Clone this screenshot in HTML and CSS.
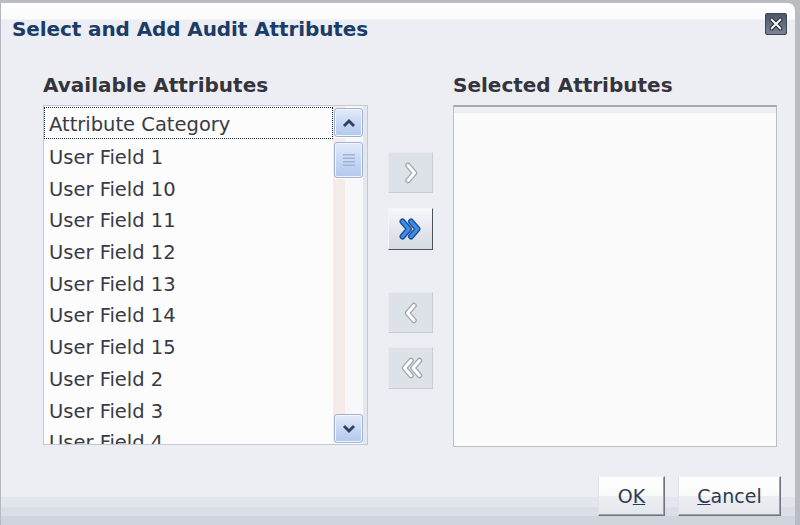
FILE: index.html
```html
<!DOCTYPE html>
<html>
<head>
<meta charset="utf-8">
<link rel="stylesheet" href="styles.css">
</head>
<body>
<div class="dialog">
  <div class="titlebar">
    <div class="title">Select and Add Audit Attributes</div>
    <div class="close">
      <svg width="22" height="22" viewBox="0 0 22 22">
        <path d="M6.5 6.5 L15.5 15.5 M15.5 6.5 L6.5 15.5" stroke="#262d3b" stroke-width="4" stroke-linecap="round"/>
        <path d="M6.5 6.5 L15.5 15.5 M15.5 6.5 L6.5 15.5" stroke="#ffffff" stroke-width="1.8" stroke-linecap="round"/>
      </svg>
    </div>
  </div>
  <div class="main">
    <div class="col col-left">
      <div class="heading">Available Attributes</div>
      <div class="listbox">
        <div class="items">
          <div class="item focused">Attribute Category</div>
          <div class="item">User Field 1</div>
          <div class="item">User Field 10</div>
          <div class="item">User Field 11</div>
          <div class="item">User Field 12</div>
          <div class="item">User Field 13</div>
          <div class="item">User Field 14</div>
          <div class="item">User Field 15</div>
          <div class="item">User Field 2</div>
          <div class="item">User Field 3</div>
          <div class="item">User Field 4</div>
        </div>
        <div class="scrollbar">
          <div class="sb-btn sb-up">
            <svg width="14" height="10" viewBox="0 0 14 10"><path d="M2 8 L7 3 L12 8" fill="none" stroke="#2f4461" stroke-width="3"/></svg>
          </div>
          <div class="sb-thumb">
            <svg width="12" height="14" viewBox="0 0 12 14">
              <rect x="0" y="1" width="12" height="1.5" fill="#9db3da"/>
              <rect x="0" y="4.5" width="12" height="1.5" fill="#9db3da"/>
              <rect x="0" y="8" width="12" height="1.5" fill="#9db3da"/>
              <rect x="0" y="11.5" width="12" height="1.5" fill="#9db3da"/>
            </svg>
          </div>
          <div class="sb-track"></div>
          <div class="sb-btn sb-down">
            <svg width="14" height="10" viewBox="0 0 14 10"><path d="M2 2 L7 7 L12 2" fill="none" stroke="#2f4461" stroke-width="3"/></svg>
          </div>
        </div>
      </div>
    </div>
    <div class="shuttle">
      <div class="sbtn sbtn-1">
        <svg width="18" height="22" viewBox="0 0 18 22"><path d="M6 3.5 L12.5 11 L6 18.5" fill="none" stroke="#9ea4ad" stroke-width="5.5" stroke-linejoin="round" stroke-linecap="round"/><path d="M6 3.5 L12.5 11 L6 18.5" fill="none" stroke="#ffffff" stroke-width="3" stroke-linejoin="round" stroke-linecap="round"/></svg>
      </div>
      <div class="sbtn sbtn-2 enabled">
        <svg width="28" height="22" viewBox="0 0 28 22"><path d="M5.5 3.5 L12 11 L5.5 18.5 M14 3.5 L20.5 11 L14 18.5" fill="none" stroke="#1e4f9f" stroke-width="6" stroke-linejoin="round" stroke-linecap="round"/><path d="M5.5 3.5 L12 11 L5.5 18.5 M14 3.5 L20.5 11 L14 18.5" fill="none" stroke="#3f8ee3" stroke-width="3.2" stroke-linejoin="round" stroke-linecap="round"/></svg>
      </div>
      <div class="sbtn sbtn-3">
        <svg width="18" height="22" viewBox="0 0 18 22"><path d="M12 3.5 L5.5 11 L12 18.5" fill="none" stroke="#9ea4ad" stroke-width="5.5" stroke-linejoin="round" stroke-linecap="round"/><path d="M12 3.5 L5.5 11 L12 18.5" fill="none" stroke="#ffffff" stroke-width="3" stroke-linejoin="round" stroke-linecap="round"/></svg>
      </div>
      <div class="sbtn sbtn-4">
        <svg width="28" height="22" viewBox="0 0 28 22"><path d="M14 3.5 L7.5 11 L14 18.5 M22.5 3.5 L16 11 L22.5 18.5" fill="none" stroke="#9ea4ad" stroke-width="5.5" stroke-linejoin="round" stroke-linecap="round"/><path d="M14 3.5 L7.5 11 L14 18.5 M22.5 3.5 L16 11 L22.5 18.5" fill="none" stroke="#ffffff" stroke-width="3" stroke-linejoin="round" stroke-linecap="round"/></svg>
      </div>
    </div>
    <div class="col col-right">
      <div class="heading">Selected Attributes</div>
      <div class="listbox listbox-right"></div>
    </div>
  </div>
  <div class="footer">
    <button class="btn btn-ok">O<u>K</u></button>
    <button class="btn btn-cancel"><u>C</u>ancel</button>
  </div>
</div>
</body>
</html>
```
FILE: styles.css
```css
html, body {
  margin: 0;
  padding: 0;
  width: 800px;
  height: 525px;
  overflow: hidden;
  background: #b9bcc3;
}
body {
  font-family: "DejaVu Sans", "Liberation Sans", sans-serif;
  color: #3a3a44;
}
.dialog {
  box-sizing: border-box;
  width: 795px;
  height: 522px;
  margin-top: 3px;
  border-left: 1px solid #b4b8c0;
  border-radius: 0 7px 0 0;
  background: linear-gradient(to bottom, #fefefe 0, #fbfbfc 16px, #eceef3 17px, #eceef3 494px, #e2e5eb 494px, #e2e5eb 504px, #dadee6 504px, #dadee6 513px, #d0d4dd 513px);
  display: flex;
  flex-direction: column;
}
.titlebar {
  display: flex;
  justify-content: space-between;
  align-items: flex-start;
  padding: 14px 8px 0 11px;
  height: 23px;
}
.title {
  font-size: 20px;
  font-weight: bold;
  line-height: 24px;
  color: #1a3c66;
  letter-spacing: -0.1px;
}
.close {
  width: 22px;
  height: 22px;
  margin-top: -4px;
  border-radius: 3px;
  background: linear-gradient(to bottom, #4c5566, #6a7383 60%, #7f8796);
  box-shadow: inset 0 0 0 1px #3e4655;
}
.close svg { display: block; }
.main {
  display: flex;
  padding-left: 42px;
  margin-top: 33px;
}
.col-left { width: 325px; }
.col-right { width: 324px; margin-left: 20px; }
.heading {
  font-size: 20px;
  font-weight: bold;
  line-height: 24px;
  color: #34343c;
  margin-bottom: 8px;
}
.listbox {
  box-sizing: border-box;
  height: 340px;
  border: 1px solid #c3c8d1;
  background: #fcfcfd;
  display: flex;
  overflow: hidden;
}
.items {
  flex: 1;
  padding: 1px 0 0 0;
  overflow: hidden;
}
.item {
  box-sizing: border-box;
  height: 31.7px;
  line-height: 35px;
  font-size: 19.5px;
  padding-left: 4px;
  white-space: nowrap;
  border: 1px solid transparent;
}
.item.focused {
  border: 1px dotted #1a2944;
  height: 32px;
  line-height: 34px;
  overflow: hidden;
}
.scrollbar {
  width: 33px;
  display: flex;
  flex-direction: column;
  align-items: flex-start;
  padding: 2px 0 1px 1px;
  background: linear-gradient(to right, #f5ecea 0, #f5ecea 12px, #f8f8fa 12px, #f8f8fa 30px, #e4e7ed 30px);
}
.sb-btn, .sb-thumb {
  box-sizing: border-box;
  width: 29px;
  border: 1px solid #9fb2d2;
  border-radius: 3px;
  background: linear-gradient(to bottom, #e3ebf9, #c4d5f2 60%, #b3c8ee);
  box-shadow: inset 0 0 0 1px #f2f6fd, 0 1px 0 #ffffff;
  display: flex;
  align-items: center;
  justify-content: center;
}
.sb-btn { height: 29px; }
.sb-btn svg, .sb-thumb svg { display: block; }
.sb-thumb { height: 36px; margin-top: 5px; }
.sb-track { flex: 1; }
.shuttle {
  width: 45px;
  margin-left: 20px;
  display: flex;
  flex-direction: column;
}
.sbtn {
  box-sizing: border-box;
  width: 45px;
  height: 41px;
  background: #dde1e8;
  border: 1px solid;
  border-color: #e6e9ee #c8ccd4 #c8ccd4 #e6e9ee;
  display: flex;
  align-items: center;
  justify-content: center;
}
.sbtn svg { display: block; }
.sbtn-1 { margin-top: 79px; }
.sbtn-2 { margin-top: 15px; height: 42px; }
.sbtn-3 { margin-top: 42px; }
.sbtn-4 { margin-top: 14px; height: 42px; }
.sbtn.enabled {
  background: linear-gradient(to bottom, #f7f8fa, #e4e7ed 50%, #d6dae2);
  border-color: #f4f5f8 #4c525c #4c525c #f4f5f8;
}
.listbox-right {
  height: 342px;
  border: 1px solid #b9bec7;
  border-top: 2px solid #a4aab3;
  background: linear-gradient(to bottom, #eceef2 0, #eceef2 6px, #fbfbfc 6px);
}
.footer {
  display: flex;
  justify-content: flex-end;
  gap: 13px;
  padding-right: 14px;
  margin-top: auto;
  margin-bottom: 9px;
}
.btn {
  box-sizing: border-box;
  height: 40px;
  font-family: "DejaVu Sans", "Liberation Sans", sans-serif;
  font-size: 19px;
  color: #2c3a55;
  background: linear-gradient(to bottom, #ffffff 0, #f9fafb 50%, #eceef2 50%, #e4e7ec);
  border: 1px solid;
  border-color: #eef0f3 #6f747d #6f747d #e0e3e8;
  box-shadow: inset -1px -1px 0 #9a9fa8;
  padding: 0;
}
.btn-ok { width: 67px; }
.btn-cancel { width: 103px; }
```
